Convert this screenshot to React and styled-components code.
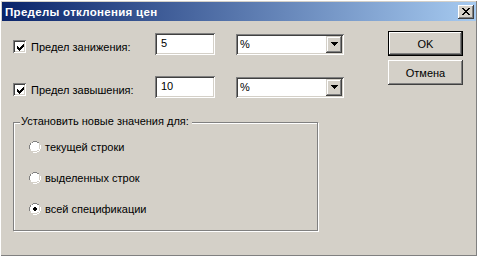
import React from 'react';
import styled, { createGlobalStyle } from 'styled-components';

const Global = createGlobalStyle`
  html, body {
    margin: 0;
    padding: 0;
    background: #D4D0C8;
  }
  * {
    box-sizing: border-box;
  }
`;

const Window = styled.div`
  width: 477px;
  height: 256px;
  padding: 2px 1px 1px 2px;
  background: #D4D0C8;
  box-shadow: inset 0 1px #fff, inset 1px 0 #fff, inset -1px -1px #808080;
  display: flex;
  flex-direction: column;
  font-family: 'Liberation Sans', Arial, sans-serif;
  font-size: 11px;
  color: #000;
`;

const TitleBar = styled.div`
  height: 19px;
  padding: 0 2px 0 3px;
  display: flex;
  align-items: center;
  justify-content: space-between;
  background: linear-gradient(to right, #0A246A, #A6CAF0);
`;

const Title = styled.span`
  color: #fff;
  font-weight: bold;
  font-size: 11.5px;
  letter-spacing: 0.3px;
`;

const CloseButton = styled.div`
  width: 16px;
  height: 14px;
  background: #D4D0C8;
  box-shadow: inset -1px -1px #404040, inset 1px 1px #fff, inset -2px -2px #808080;
  display: flex;
  align-items: center;
  justify-content: center;
  padding-bottom: 1px;
`;

const Body = styled.div`
  flex: 1;
  display: flex;
  padding: 10px 0 0 11px;
`;

const Fields = styled.div`
  width: 331px;
  padding-top: 2px;
  display: flex;
  flex-direction: column;
`;

const FieldRow = styled.div`
  display: flex;
  align-items: center;
  height: 22px;
  margin-bottom: ${p => p.$gap}px;
`;

const CheckLabel = styled.label`
  width: 142px;
  display: flex;
  align-items: center;
  gap: 5px;
  margin-top: 5px;
`;

const CheckBox = styled.span`
  width: 13px;
  height: 13px;
  background: #fff;
  box-shadow: inset 1px 1px #808080, inset -1px -1px #fff, inset 2px 2px #404040, inset -2px -2px #D4D0C8;
  display: flex;
  align-items: center;
  justify-content: center;
  padding: 1px 0 0 1px;
`;

const Sunken = styled.div`
  background: #fff;
  box-shadow: inset 1px 1px #808080, inset -1px -1px #fff, inset 2px 2px #404040, inset -2px -2px #D4D0C8;
`;

const TextInput = styled(Sunken)`
  width: 60px;
  height: 22px;
  padding: 4px 0 0 6px;
  margin-right: 21px;
`;

const Combo = styled(Sunken)`
  width: 108px;
  height: 21px;
  padding: 2px;
  display: flex;
  align-items: stretch;
`;

const ComboText = styled.span`
  flex: 1;
  padding: 2px 0 0 2px;
`;

const DropButton = styled.span`
  width: 16px;
  background: #D4D0C8;
  box-shadow: inset -1px -1px #404040, inset 1px 1px #D4D0C8, inset -2px -2px #808080, inset 2px 2px #fff;
  display: flex;
  align-items: center;
  justify-content: center;
`;

const GroupBox = styled.div`
  position: relative;
  width: 305px;
  height: 109px;
  border: 1px solid #808080;
  box-shadow: inset 1px 1px #fff, 1px 1px #fff;
  padding: 18px 0 0 15px;
  display: flex;
  flex-direction: column;
  gap: 19px;
`;

const Legend = styled.span`
  position: absolute;
  top: -8px;
  left: 6px;
  padding: 0 3px 0 1px;
  background: #D4D0C8;
`;

const RadioRow = styled.label`
  display: flex;
  align-items: center;
  gap: 4px;
  height: 12px;
`;

const Buttons = styled.div`
  margin-left: 44px;
  display: flex;
  flex-direction: column;
  gap: 4px;
`;

const Button = styled.div`
  width: 75px;
  height: 25px;
  display: flex;
  align-items: center;
  justify-content: center;
  background: #D4D0C8;
  box-shadow: ${p => p.$default
    ? 'inset 0 0 0 1px #000, inset -2px -2px #404040, inset 2px 2px #fff, inset -3px -3px #808080'
    : 'inset -1px -1px #404040, inset 1px 1px #fff, inset -2px -2px #808080'};
`;

// classic 7x7 tick, drawn column by column
const tick = [[2, 3], [3, 3], [4, 3], [3, 3], [2, 3], [1, 3], [0, 3]];

const CheckMark = () => (
  <svg width="7" height="7" viewBox="0 0 7 7" shapeRendering="crispEdges">
    {tick.map(([y, h], x) => (
      <rect key={x} x={x} y={y} width="1" height={h} fill="#000" />
    ))}
  </svg>
);

const Radio = ({ checked }) => (
  <svg width="12" height="12" viewBox="0 0 12 12" shapeRendering="crispEdges">
    <path d="M4 0h4v1h2v1h-2v-1h-4v1h-2v2h-1v4h-1v-4h1v-2h2z" fill="#808080" />
    <path d="M4 1h4v1h2v1h-2v-1h-4v1h-1v1h-1v4h-1v-4h1v-1h1v-1h1z" fill="#404040" />
    <path d="M2 2h8v8h-8z M1 4h10v4h-10z M4 1h4v10h-4z" fill="#fff" />
    <path d="M11 4h1v4h-1v2h-1v1h-2v1h-4v-1h4v-1h2v-2h1z" fill="#fff" />
    <path d="M10 4h1v4h-1v2h-2v1h-4v-1h4v-1h2z" fill="#D4D0C8" />
    {checked && <path d="M5 4h2v1h1v2h-1v1h-2v-1h-1v-2h1z" fill="#000" />}
  </svg>
);

const DropArrow = () => (
  <svg width="7" height="4" viewBox="0 0 7 4" shapeRendering="crispEdges">
    <path d="M0 0h7v1h-1v1h-1v1h-1v1h-1v-1h-1v-1h-1v-1h-1z" fill="#000" />
  </svg>
);

const CloseX = () => (
  <svg width="8" height="7" viewBox="0 0 8 7" shapeRendering="crispEdges">
    <path d="M0 0h2v1h1v1h2v-1h1v-1h2v1h-1v1h-1v1h-1v1h1v1h1v1h1v1h-2v-1h-1v-1h-2v1h-1v1h-2v-1h1v-1h1v-1h1v-1h-1v-1h-1v-1h-1z" fill="#000" />
  </svg>
);

const limits = [
  { label: 'Предел занижения:', value: '5', gap: 21 },
  { label: 'Предел завышения:', value: '10', gap: 24 },
];

const targets = [
  { label: 'текущей строки', checked: false },
  { label: 'выделенных строк', checked: false },
  { label: 'всей спецификации', checked: true },
];

export default function App() {
  return (
    <>
      <Global />
      <Window>
        <TitleBar>
          <Title>Пределы отклонения цен</Title>
          <CloseButton><CloseX /></CloseButton>
        </TitleBar>
        <Body>
          <Fields>
            {limits.map(l => (
              <FieldRow key={l.label} $gap={l.gap}>
                <CheckLabel>
                  <CheckBox><CheckMark /></CheckBox>
                  {l.label}
                </CheckLabel>
                <TextInput>{l.value}</TextInput>
                <Combo>
                  <ComboText>%</ComboText>
                  <DropButton><DropArrow /></DropButton>
                </Combo>
              </FieldRow>
            ))}
            <GroupBox>
              <Legend>Установить новые значения для:</Legend>
              {targets.map(t => (
                <RadioRow key={t.label}>
                  <Radio checked={t.checked} />
                  {t.label}
                </RadioRow>
              ))}
            </GroupBox>
          </Fields>
          <Buttons>
            <Button $default>OK</Button>
            <Button>Отмена</Button>
          </Buttons>
        </Body>
      </Window>
    </>
  );
}
